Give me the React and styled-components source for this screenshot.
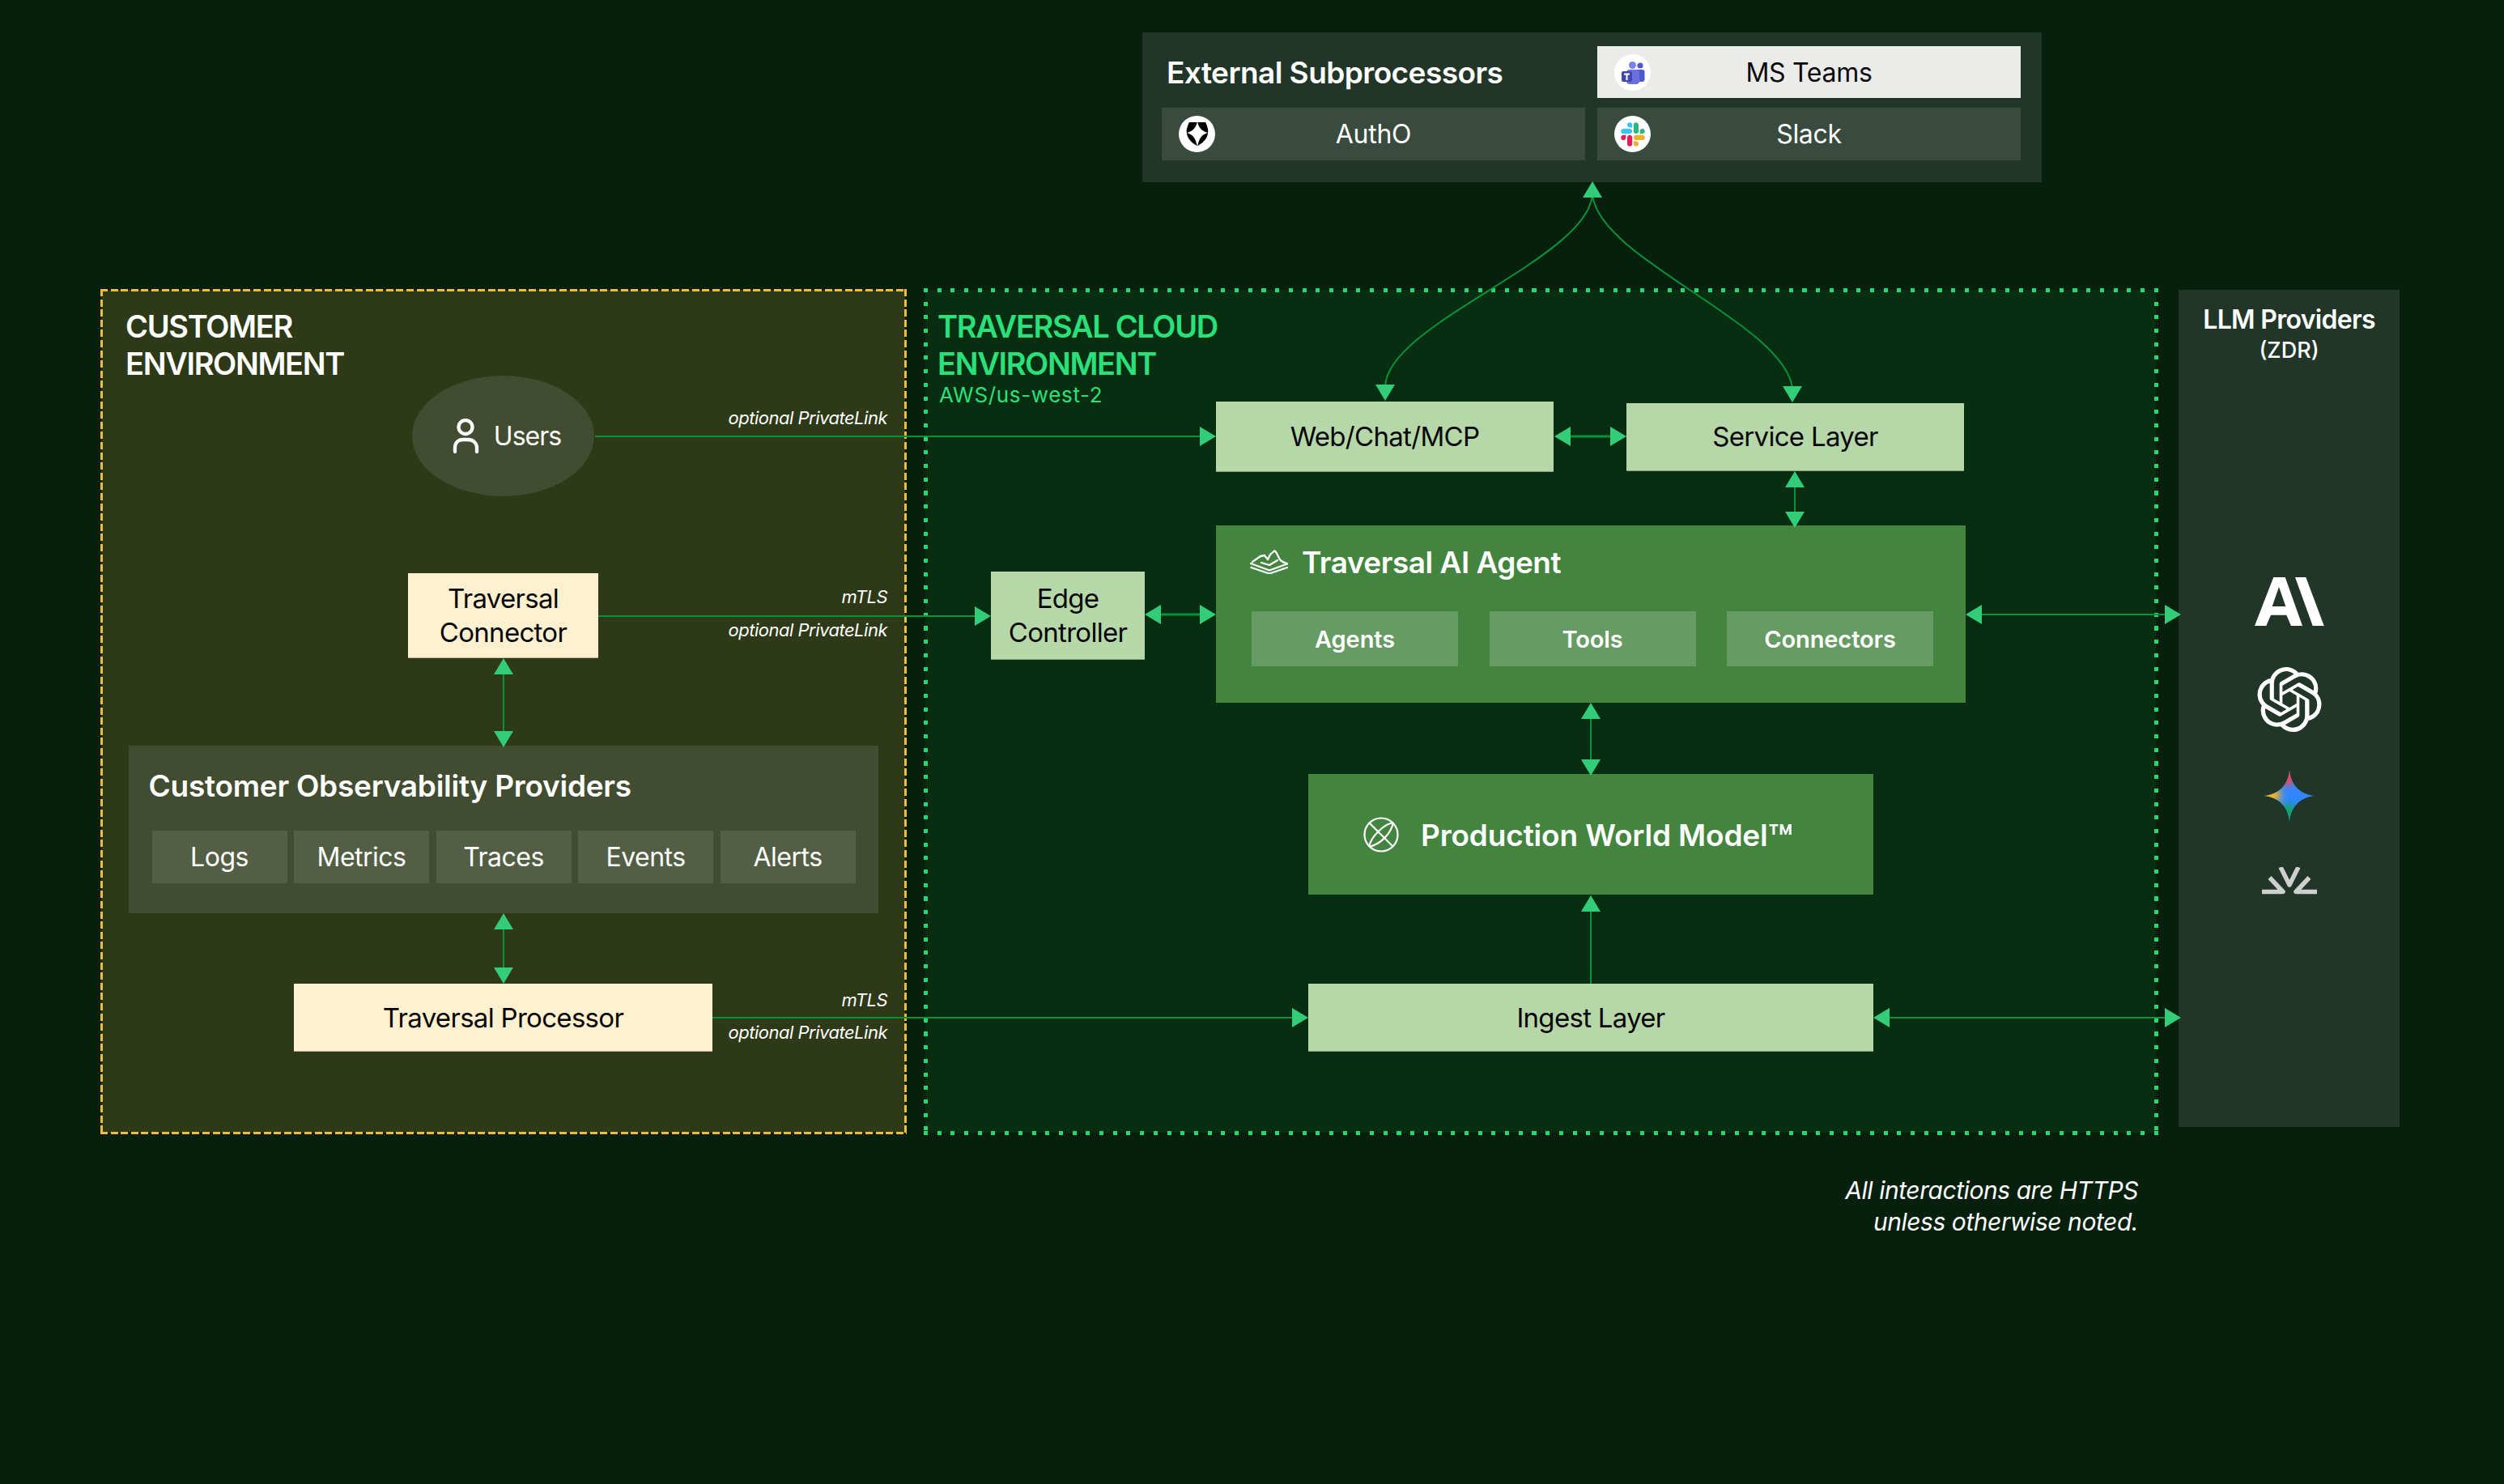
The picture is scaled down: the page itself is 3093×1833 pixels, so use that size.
import React from "react";
import styled, { createGlobalStyle } from "styled-components";
import { SiOpenai } from "react-icons/si";

const GlobalStyle = createGlobalStyle`
  html, body {
    margin: 0;
    padding: 0;
    background: #06200d;
  }
  body {
    font-family: Inter, "Liberation Sans", sans-serif;
    color: #fff;
  }
`;

// four repeating strips, used as a dashed/dotted frame that straddles the panel edge
const frame = (color, on, period, thick) => {
  const h = `repeating-linear-gradient(90deg, ${color} 0 ${on}px, transparent ${on}px ${period}px)`;
  const v = `repeating-linear-gradient(180deg, ${color} 0 ${on}px, transparent ${on}px ${period}px)`;
  return `
    content: "";
    position: absolute;
    inset: -${thick / 2}px;
    pointer-events: none;
    background-image: ${h}, ${h}, ${v}, ${v};
    background-size: 100% ${thick}px, 100% ${thick}px, ${thick}px 100%, ${thick}px 100%;
    background-position: top left, bottom left, top left, top right;
    background-repeat: no-repeat;
  `;
};

const Page = styled.div`
  position: relative;
  width: 3093px;
  height: 1833px;
  overflow: hidden;
  padding-top: 40px;
  box-sizing: border-box;
  background: #06200d;
`;

/* top box */
const SubBox = styled.section`
  margin-left: 1411px;
  width: 1111px;
  height: 185px;
  box-sizing: border-box;
  padding: 17px 26px 0 24px;
  background: #213628;
  display: grid;
  grid-template-columns: 523px 523px;
  grid-template-rows: 64px 65px;
  column-gap: 15px;
  row-gap: 12px;
`;

const SubTitle = styled.h2`
  margin: 0;
  padding-left: 6px;
  align-self: center;
  font-size: 37px;
  font-weight: 600;
  letter-spacing: -0.55px;
  color: #fff;
`;

const SubChip = styled.div`
  position: relative;
  display: flex;
  align-items: center;
  justify-content: center;
  font-size: 32px;
  letter-spacing: -0.3px;
  background: ${(p) => (p.$light ? "#ebebe9" : "#394b3e")};
  color: ${(p) => (p.$light ? "#0a0a0a" : "#fff")};
`;

const Badge = styled.span`
  position: absolute;
  left: 21px;
  top: 10px;
  width: 45px;
  height: 45px;
  border-radius: 50%;
  background: #fff;
  display: flex;
  align-items: center;
  justify-content: center;
  color: #000;
`;

/* environment row */
const EnvRow = styled.div`
  display: flex;
  align-items: flex-start;
  margin-top: 133px;
  padding-left: 125px;
`;

const CustomerPanel = styled.section`
  position: relative;
  width: 993px;
  height: 1041px;
  flex: none;
  background: #2d3917;
  display: flex;
  flex-direction: column;
  align-items: center;
  box-sizing: border-box;
  padding-top: 22px;
  &::after {
    ${frame("#efbd3e", 9, 12.6, 3)}
  }
`;

const CloudPanel = styled.section`
  position: relative;
  width: 1520px;
  height: 1041px;
  flex: none;
  margin-left: 25px;
  background: #082e11;
  display: flex;
  &::after {
    ${frame("#25d875", 5, 16.7, 5)}
  }
`;

const LlmPanel = styled.section`
  width: 273px;
  height: 1034px;
  flex: none;
  margin-left: 28px;
  background: #213628;
  display: flex;
  flex-direction: column;
  align-items: center;
  padding-top: 18px;
  box-sizing: border-box;
`;

const EnvTitle = styled.h2`
  margin: 0;
  align-self: flex-start;
  padding-left: ${(p) => p.$pad}px;
  font-size: 38px;
  line-height: 46px;
  font-weight: 600;
  letter-spacing: -1.35px;
  white-space: nowrap;
  color: ${(p) => p.$color};
`;

const Region = styled.div`
  margin-top: 1px;
  padding-left: 17px;
  font-size: 26px;
  line-height: 30px;
  letter-spacing: 0.65px;
  color: #2ae07b;
`;

const LeftCol = styled.div`
  width: 359px;
  flex: none;
  padding-top: 22px;
  box-sizing: border-box;
`;

const MainCol = styled.div`
  width: 926px;
  flex: none;
  padding-top: 138px;
  display: flex;
  flex-direction: column;
  align-items: center;
`;

const Bubble = styled.div`
  width: 225px;
  height: 149px;
  margin-top: -8px;
  padding-left: 8px;
  box-sizing: border-box;
  border-radius: 50%;
  background: #414c30;
  display: flex;
  align-items: center;
  justify-content: center;
  gap: 17px;
  font-size: 32px;
  letter-spacing: -1px;
`;

// light coloured box with black text, e.g. Traversal Connector or Ingest Layer
const Box = styled.div`
  width: ${(p) => p.$w}px;
  height: ${(p) => p.$h}px;
  margin-top: ${(p) => p.$top || 0}px;
  margin-left: ${(p) => p.$left || 0}px;
  flex: none;
  display: flex;
  align-items: center;
  justify-content: center;
  text-align: center;
  box-sizing: border-box;
  font-size: 33px;
  line-height: 42px;
  letter-spacing: -0.7px;
  color: #050505;
  background: ${(p) => (p.$tone === "cream" ? "#fff0cf" : "#b6d7a8")};
  border-bottom: 1px solid rgba(0, 0, 0, 0.25);
`;

const ObsBox = styled.section`
  width: 926px;
  height: 207px;
  margin-top: 108px;
  background: #414c30;
  box-sizing: border-box;
  padding: 26px 29px 0;
`;

const ObsTitle = styled.h3`
  margin: 0 0 0 -4px;
  font-size: 37px;
  line-height: 47px;
  font-weight: 600;
  letter-spacing: -0.25px;
`;

const ObsRow = styled.div`
  display: grid;
  grid-template-columns: repeat(5, 167px);
  column-gap: 8.5px;
  margin-top: 32px;
`;

const ObsItem = styled.div`
  height: 65px;
  background: #535f45;
  display: flex;
  align-items: center;
  justify-content: center;
  font-size: 32px;
  letter-spacing: -0.5px;
`;

const LinkLabel = styled.span`
  position: absolute;
  right: 22px;
  top: ${(p) => p.$top}px;
  font-size: 22px;
  line-height: 26px;
  font-style: italic;
  letter-spacing: -0.5px;
  color: #fff;
`;

const TopRow = styled.div`
  width: 924px;
  align-self: flex-start;
  display: flex;
  align-items: center;
  justify-content: space-between;
`;

const AgentBox = styled.section`
  width: 926px;
  height: 219px;
  margin-top: 66px;
  background: #43843f;
  box-sizing: border-box;
  padding: 31px 0 0 42px;
`;

const AgentHead = styled.div`
  display: flex;
  align-items: center;
  gap: 17px;
  height: 28px;
`;

const AgentTitle = styled.h3`
  margin: 0;
  font-size: 37px;
  font-weight: 600;
  letter-spacing: -0.5px;
`;

const AgentRow = styled.div`
  display: grid;
  grid-template-columns: repeat(3, 255px);
  column-gap: 38.5px;
  margin: 47px 0 0 2px;
`;

const AgentChip = styled.div`
  height: 68px;
  background: #669b64;
  display: flex;
  align-items: center;
  justify-content: center;
  font-size: 29px;
  font-weight: 600;
  letter-spacing: -0.1px;
`;

const ModelBox = styled.section`
  width: 698px;
  height: 149px;
  margin-top: 88px;
  background: #43843f;
  display: flex;
  align-items: center;
  gap: 27px;
  padding-left: 68px;
  box-sizing: border-box;
  font-size: 37px;
  font-weight: 600;
  letter-spacing: -0.15px;
`;

const ModelName = styled.span`
  position: relative;
  top: 1px;
`;

const Tm = styled.span`
  font-size: 50px;
  line-height: 0;
  vertical-align: -9px;
`;

const LlmTitle = styled.h2`
  margin: 0;
  font-size: 32px;
  line-height: 38px;
  font-weight: 600;
  letter-spacing: -0.7px;
`;

const LlmSub = styled.div`
  margin-top: 3px;
  font-size: 27px;
  line-height: 32px;
  font-weight: 500;
`;

const LogoSlot = styled.div`
  margin-top: ${(p) => p.$top}px;
  display: flex;
  color: #fff;
`;

const Note = styled.p`
  margin: 52px 452px 0 0;
  text-align: right;
  font-size: 30px;
  line-height: 39px;
  font-style: italic;
  letter-spacing: -0.45px;
  color: #fff;
`;

const ArrowLayer = styled.svg`
  position: absolute;
  top: 0;
  left: 0;
  pointer-events: none;
`;

const LINE = "#07933a";
const HEAD = "#33cc78";

const lines = [
  [735, 539, 1484, 539],
  [739, 761, 1206, 761],
  [880, 1257, 1598, 1257],
  [622, 832, 622, 906],
  [622, 1146, 622, 1197],
  [2217, 600, 2217, 634],
  [1965, 886, 1965, 942],
  [1965, 1124, 1965, 1215],
  [1938, 539, 1991, 539, 3],
  [1432, 759, 1485, 759, 3],
  [2446, 759, 2676, 759],
  [2332, 1257, 2676, 1257],
];

// tip x, tip y, direction
const heads = [
  [1502, 539, "r"],
  [1224, 761, "r"],
  [1616, 1257, "r"],
  [622, 813, "u"],
  [622, 923, "d"],
  [622, 1128, "u"],
  [622, 1215, "d"],
  [1920, 539, "l"],
  [2009, 539, "r"],
  [2217, 582, "u"],
  [2217, 652, "d"],
  [1414, 759, "l"],
  [1502, 759, "r"],
  [2428, 759, "l"],
  [2694, 759, "r"],
  [1965, 868, "u"],
  [1965, 958, "d"],
  [1965, 1106, "u"],
  [2314, 1257, "l"],
  [2694, 1257, "r"],
  [1967, 224, "u"],
  [1711, 495, "d"],
  [2214, 497, "d"],
];

const headPoints = ([x, y, dir]) => {
  const len = 20;
  const half = 12;
  if (dir === "r") return `${x},${y} ${x - len},${y - half} ${x - len},${y + half}`;
  if (dir === "l") return `${x},${y} ${x + len},${y - half} ${x + len},${y + half}`;
  if (dir === "u") return `${x},${y} ${x - half},${y + len} ${x + half},${y + len}`;
  return `${x},${y} ${x - half},${y - len} ${x + half},${y - len}`;
};

const Arrows = () => (
  <ArrowLayer width="3093" height="1833" viewBox="0 0 3093 1833" fill="none">
    <path d="M1967 240 C1962 320 1712 400 1711 478" stroke={LINE} strokeWidth="2" />
    <path d="M1967 240 C1974 320 2206 400 2214 480" stroke={LINE} strokeWidth="2" />
    {lines.map(([x1, y1, x2, y2, w], i) => (
      <line key={i} x1={x1} y1={y1} x2={x2} y2={y2} stroke={LINE} strokeWidth={w || 2} />
    ))}
    {heads.map((h, i) => (
      <polygon key={i} points={headPoints(h)} fill={HEAD} />
    ))}
  </ArrowLayer>
);

const UserIcon = () => (
  <svg width="35" height="44" viewBox="0 0 35 44" fill="none" stroke="#fff" strokeWidth="4.3" strokeLinecap="round">
    <circle cx="17" cy="10.5" r="8.5" />
    <path d="M4 41v-5c0-6 4-10 10-10h6c6 0 11 4 11 10v5" />
  </svg>
);

const TeamsIcon = () => (
  <svg width="30" height="28" viewBox="0 0 30 28">
    <circle cx="24" cy="5" r="3.6" fill="#5059c9" />
    <rect x="18" y="10" width="11.5" height="15" rx="3" fill="#5059c9" />
    <circle cx="14.5" cy="4.5" r="4.5" fill="#7b83eb" />
    <rect x="7" y="10" width="16" height="18" rx="4" fill="#6a70e0" />
    <rect x="1" y="12" width="13" height="13" rx="2" fill="#4048b0" />
    <polygon points="4,14.5 11,14.5 11,16.5 8.5,16.5 8.5,23 6.5,23 6.5,16.5 4,16.5" fill="#fff" />
  </svg>
);

const AuthIcon = () => (
  <svg width="28" height="31" viewBox="0 0 28 31">
    <path d="M4 1 H24 C26 5 28 10 27 15 C26 22 20 27 14 30.500 C8 27 2 22 1 15 C0 10 2 5 4 1 Z" fill="#000" />
    <path d="M14 -1 C15 7 19 12 27 14 C19 16 15.500 22 14 32 C12.500 22 9 16 1 14 C9 12 13 7 14 -1 Z" fill="#fff" />
  </svg>
);

const SlackIcon = () => (
  <svg width="30" height="30" viewBox="0 0 127 127">
    <path d="M27.2 80c0 7.3-5.9 13.2-13.2 13.2C6.7 93.2.8 87.3.8 80c0-7.3 5.9-13.2 13.2-13.2h13.2V80zm6.6 0c0-7.3 5.9-13.2 13.2-13.2 7.3 0 13.2 5.9 13.2 13.2v33c0 7.3-5.9 13.2-13.2 13.2-7.3 0-13.2-5.9-13.2-13.2V80z" fill="#E01E5A" />
    <path d="M47 27c-7.3 0-13.2-5.9-13.2-13.2C33.8 6.5 39.7.6 47 .6c7.3 0 13.2 5.9 13.2 13.2V27H47zm0 6.7c7.3 0 13.2 5.9 13.2 13.2 0 7.3-5.9 13.2-13.2 13.2H13.9C6.6 60.1.7 54.2.7 46.9c0-7.3 5.9-13.2 13.2-13.2H47z" fill="#36C5F0" />
    <path d="M99.9 46.9c0-7.3 5.9-13.2 13.2-13.2 7.3 0 13.2 5.9 13.2 13.2 0 7.3-5.9 13.2-13.2 13.2H99.9V46.9zm-6.6 0c0 7.3-5.9 13.2-13.2 13.2-7.3 0-13.2-5.9-13.2-13.2V13.8C66.9 6.5 72.8.6 80.1.6c7.3 0 13.2 5.9 13.2 13.2v33.1z" fill="#2EB67D" />
    <path d="M80.1 99.8c7.3 0 13.2 5.9 13.2 13.2 0 7.3-5.9 13.2-13.2 13.2-7.3 0-13.2-5.9-13.2-13.2V99.8h13.2zm0-6.6c-7.3 0-13.2-5.9-13.2-13.2 0-7.3 5.9-13.2 13.2-13.2h33.1c7.3 0 13.2 5.9 13.2 13.2 0 7.3-5.9 13.2-13.2 13.2H80.1z" fill="#ECB22E" />
  </svg>
);

const AgentIcon = () => (
  <svg width="47" height="30" viewBox="0 0 47 30" fill="none" stroke="#fff" strokeWidth="2.3" strokeLinejoin="round" strokeLinecap="round">
    <path d="M3 15 L13 8 L18 7 L22 12 L25 6 L30 1.500 C33 1.500 34 8 37 12 C39 15 42 16 46 17" />
    <path d="M1 17 L24 25.500 L46 17.500" />
    <path d="M14 16 L24 19 L34 13" />
    <path d="M1.500 22 L24 29.500 L46 22" />
  </svg>
);

const WorldIcon = () => (
  <svg width="44" height="44" viewBox="0 0 44 44" fill="none" stroke="#fff" strokeWidth="2.2">
    <ellipse cx="22" cy="22" rx="20.500" ry="20.500" />
    <path d="M7 7 L37 37" />
    <path d="M37 7 C26 9 10 23 7 37" />
    <path d="M37 7 C34 21 21 34 7 37" />
  </svg>
);

const AnthropicLogo = () => (
  <svg width="86" height="60" viewBox="0 0 86 60" fill="#fff">
    <path fillRule="evenodd" d="M23.300 0 H37.700 L59 60 H45 L39.300 46.700 H20 L14.300 60 H0 Z M30 12 L21.700 36 H38.300 Z" />
    <polygon points="50,0 63.300,0 85.700,60 71.700,60" />
  </svg>
);

const GeminiLogo = () => (
  <svg width="64" height="64" viewBox="0 0 64 64">
    <defs>
      <clipPath id="gemStar">
        <path d="M32 0 C33 18 46 31 64 32 C46 33 33 46 32 64 C31 46 18 33 0 32 C18 31 31 18 32 0 Z" />
      </clipPath>
      <filter id="gemBlur" x="-50%" y="-50%" width="200%" height="200%">
        <feGaussianBlur stdDeviation="5" />
      </filter>
    </defs>
    <g clipPath="url(#gemStar)">
      <rect width="64" height="64" fill="#3186ff" />
      <g filter="url(#gemBlur)">
        <ellipse cx="28" cy="6" rx="13" ry="13" fill="#f04a50" />
        <ellipse cx="6" cy="31" rx="15" ry="11" fill="#fbb80c" />
        <ellipse cx="30" cy="56" rx="12" ry="14" fill="#0ea55f" />
      </g>
    </g>
  </svg>
);

const SparkLogo = () => (
  <svg width="68" height="34" viewBox="0 0 68 34" fill="none" stroke="#cfcfcf" strokeWidth="5.500" strokeLinejoin="round">
    <path d="M23 0 L34 22 L45 0" />
    <path d="M9.500 13 L26 30.500 L0 30.500" />
    <path d="M58.500 13 L42 30.500 L68 30.500" />
  </svg>
);

const App = () => (
  <Page>
    <GlobalStyle />
    <SubBox>
      <SubTitle>External Subprocessors</SubTitle>
      <SubChip $light>
        <Badge><TeamsIcon /></Badge>
        MS Teams
      </SubChip>
      <SubChip>
        <Badge><AuthIcon /></Badge>
        AuthO
      </SubChip>
      <SubChip>
        <Badge><SlackIcon /></Badge>
        Slack
      </SubChip>
    </SubBox>

    <EnvRow>
      <CustomerPanel>
        <EnvTitle $pad={30} $color="#fff">CUSTOMER<br />ENVIRONMENT</EnvTitle>
        <Bubble><UserIcon />Users</Bubble>
        <Box $tone="cream" $w={235} $h={105} $top={95}>Traversal<br />Connector</Box>
        <ObsBox>
          <ObsTitle>Customer Observability Providers</ObsTitle>
          <ObsRow>
            {["Logs", "Metrics", "Traces", "Events", "Alerts"].map((s) => (
              <ObsItem key={s}>{s}</ObsItem>
            ))}
          </ObsRow>
        </ObsBox>
        <Box $tone="cream" $w={517} $h={84} $top={87}>Traversal Processor</Box>
        <LinkLabel $top={145}>optional PrivateLink</LinkLabel>
        <LinkLabel $top={366}>mTLS</LinkLabel>
        <LinkLabel $top={407}>optional PrivateLink</LinkLabel>
        <LinkLabel $top={864}>mTLS</LinkLabel>
        <LinkLabel $top={904}>optional PrivateLink</LinkLabel>
      </CustomerPanel>

      <CloudPanel>
        <LeftCol>
          <EnvTitle $pad={15} $color="#2ae07b">TRAVERSAL CLOUD<br />ENVIRONMENT</EnvTitle>
          <Region>AWS/us-west-2</Region>
          <Box $w={190} $h={109} $top={203} $left={81}>Edge<br />Controller</Box>
        </LeftCol>
        <MainCol>
          <TopRow>
            <Box $w={417} $h={87}>Web/Chat/MCP</Box>
            <Box $w={417} $h={84}>Service Layer</Box>
          </TopRow>
          <AgentBox>
            <AgentHead>
              <AgentIcon />
              <AgentTitle>Traversal AI Agent</AgentTitle>
            </AgentHead>
            <AgentRow>
              <AgentChip>Agents</AgentChip>
              <AgentChip>Tools</AgentChip>
              <AgentChip>Connectors</AgentChip>
            </AgentRow>
          </AgentBox>
          <ModelBox>
            <WorldIcon />
            <ModelName>Production World Model<Tm>™</Tm></ModelName>
          </ModelBox>
          <Box $w={698} $h={84} $top={110}>Ingest Layer</Box>
        </MainCol>
      </CloudPanel>

      <LlmPanel>
        <LlmTitle>LLM Providers</LlmTitle>
        <LlmSub>(ZDR)</LlmSub>
        <LogoSlot $top={264}><AnthropicLogo /></LogoSlot>
        <LogoSlot $top={51}><SiOpenai size={80} /></LogoSlot>
        <LogoSlot $top={47}><GeminiLogo /></LogoSlot>
        <LogoSlot $top={56}><SparkLogo /></LogoSlot>
      </LlmPanel>
    </EnvRow>

    <Note>All interactions are HTTPS<br />unless otherwise noted.</Note>
    <Arrows />
  </Page>
);

export default App;
